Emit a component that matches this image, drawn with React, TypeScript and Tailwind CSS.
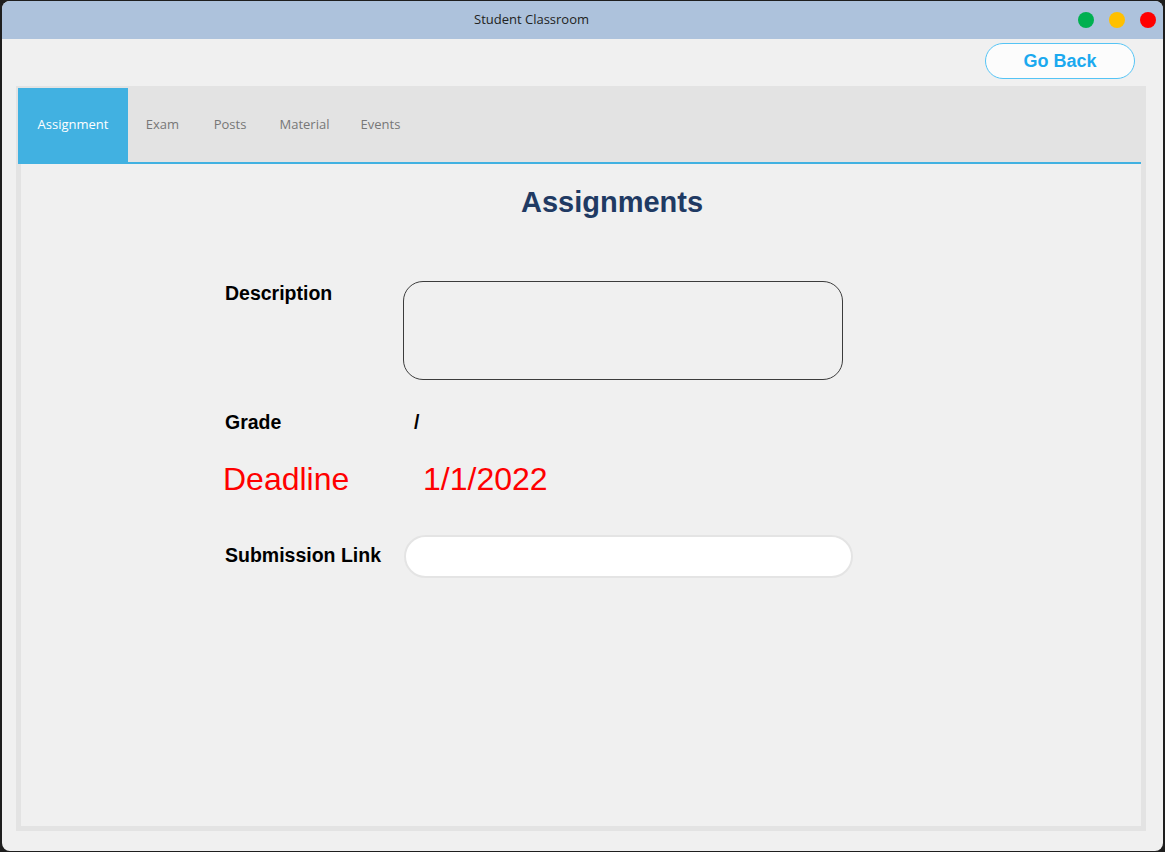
import React from 'react'

const tabs = [
  { name: 'Assignment', w: 'w-[110px]' },
  { name: 'Exam', w: 'w-[69px]' },
  { name: 'Posts', w: 'w-[66px]' },
  { name: 'Material', w: 'w-[83px]' },
  { name: 'Events', w: 'w-[69px]' },
]

export default function App() {
  return (
    <div className="w-[1165px] h-[852px] bg-[#1e1e1e] pt-[1px] pl-[2px] pr-[2px]">
      <div className="h-[850px] rounded-[8px] bg-[#f0f0f0] overflow-hidden flex flex-col">
        {/* Title bar */}
        <div className="h-[38px] bg-[#adc2dc] flex items-center pl-[472px] pr-[7px] shrink-0">
          <span className="text-[13px] text-[#222] font-['Open_Sans',sans-serif]">Student Classroom</span>
          <div className="ml-auto flex items-center gap-[15px]">
            <span className="w-4 h-4 rounded-full bg-[#00b050]" />
            <span className="w-4 h-4 rounded-full bg-[#ffc000]" />
            <span className="w-4 h-4 rounded-full bg-[#ff0000]" />
          </div>
        </div>

        {/* Go back row */}
        <div className="h-[47px] flex justify-end items-start pt-[4px] pr-[28px] shrink-0">
          <button
            type="button"
            className="w-[150px] h-[36px] rounded-full border-[1.5px] border-[#55c4f5] bg-[#fcfcfc] text-[18px] font-bold text-[#1ba9ef] font-['Liberation_Sans',Arial,sans-serif]"
          >
            Go Back
          </button>
        </div>

        {/* Tab control */}
        <div className="ml-[14px] mr-[17px] h-[745px] bg-[#e3e3e3] flex flex-col">
          <div className="h-[76px] pt-[2px] pl-[2px] flex shrink-0">
            {tabs.map((t, i) => (
              <div
                key={t.name}
                className={`${t.w} h-[74px] flex items-center justify-center text-[13px] font-['Open_Sans',sans-serif] ${
                  i === 0 ? 'bg-[#41b1e1] text-white' : 'text-[#777]'
                }`}
              >
                {t.name}
              </div>
            ))}
          </div>
          <div className="h-[2px] ml-[2px] mr-[5px] bg-[#41b1e1] shrink-0" />

          <div className="flex-1 ml-[5px] mr-[5px] mb-[5px] bg-[#f0f0f0] font-['Liberation_Sans',Arial,sans-serif]">
            <h1 className="mt-[24px] pl-[500px] text-[29px] leading-none font-bold text-[#1f3a63]">Assignments</h1>

            <div className="pl-[204px] mt-[64px] flex flex-col">
              <div className="flex items-start">
                <div className="w-[178px] mt-[3px] text-[19.5px] leading-none font-bold text-black">Description</div>
                <div className="w-[440px] h-[99px] rounded-[20px] border border-[#3c3c3c]" />
              </div>

              <div className="flex items-start mt-[33px]">
                <div className="w-[178px] text-[19.5px] leading-none font-bold text-black">Grade</div>
                <div className="ml-[11px] text-[19.5px] leading-none font-bold text-black">/</div>
              </div>

              <div className="flex items-start mt-[30px] -ml-[2px]">
                <div className="w-[180px] text-[32px] leading-none text-[#ff0000]">Deadline</div>
                <div className="ml-[20px] text-[32px] leading-none text-[#ff0000]">1/1/2022</div>
              </div>

              <div className="flex items-center mt-[40px]">
                <div className="w-[179px] text-[19.5px] leading-none font-bold text-black">Submission Link</div>
                <div className="w-[449px] h-[43px] rounded-full bg-white border-2 border-[#e4e4e4]" />
              </div>
            </div>
          </div>
        </div>
      </div>
    </div>
  )
}
